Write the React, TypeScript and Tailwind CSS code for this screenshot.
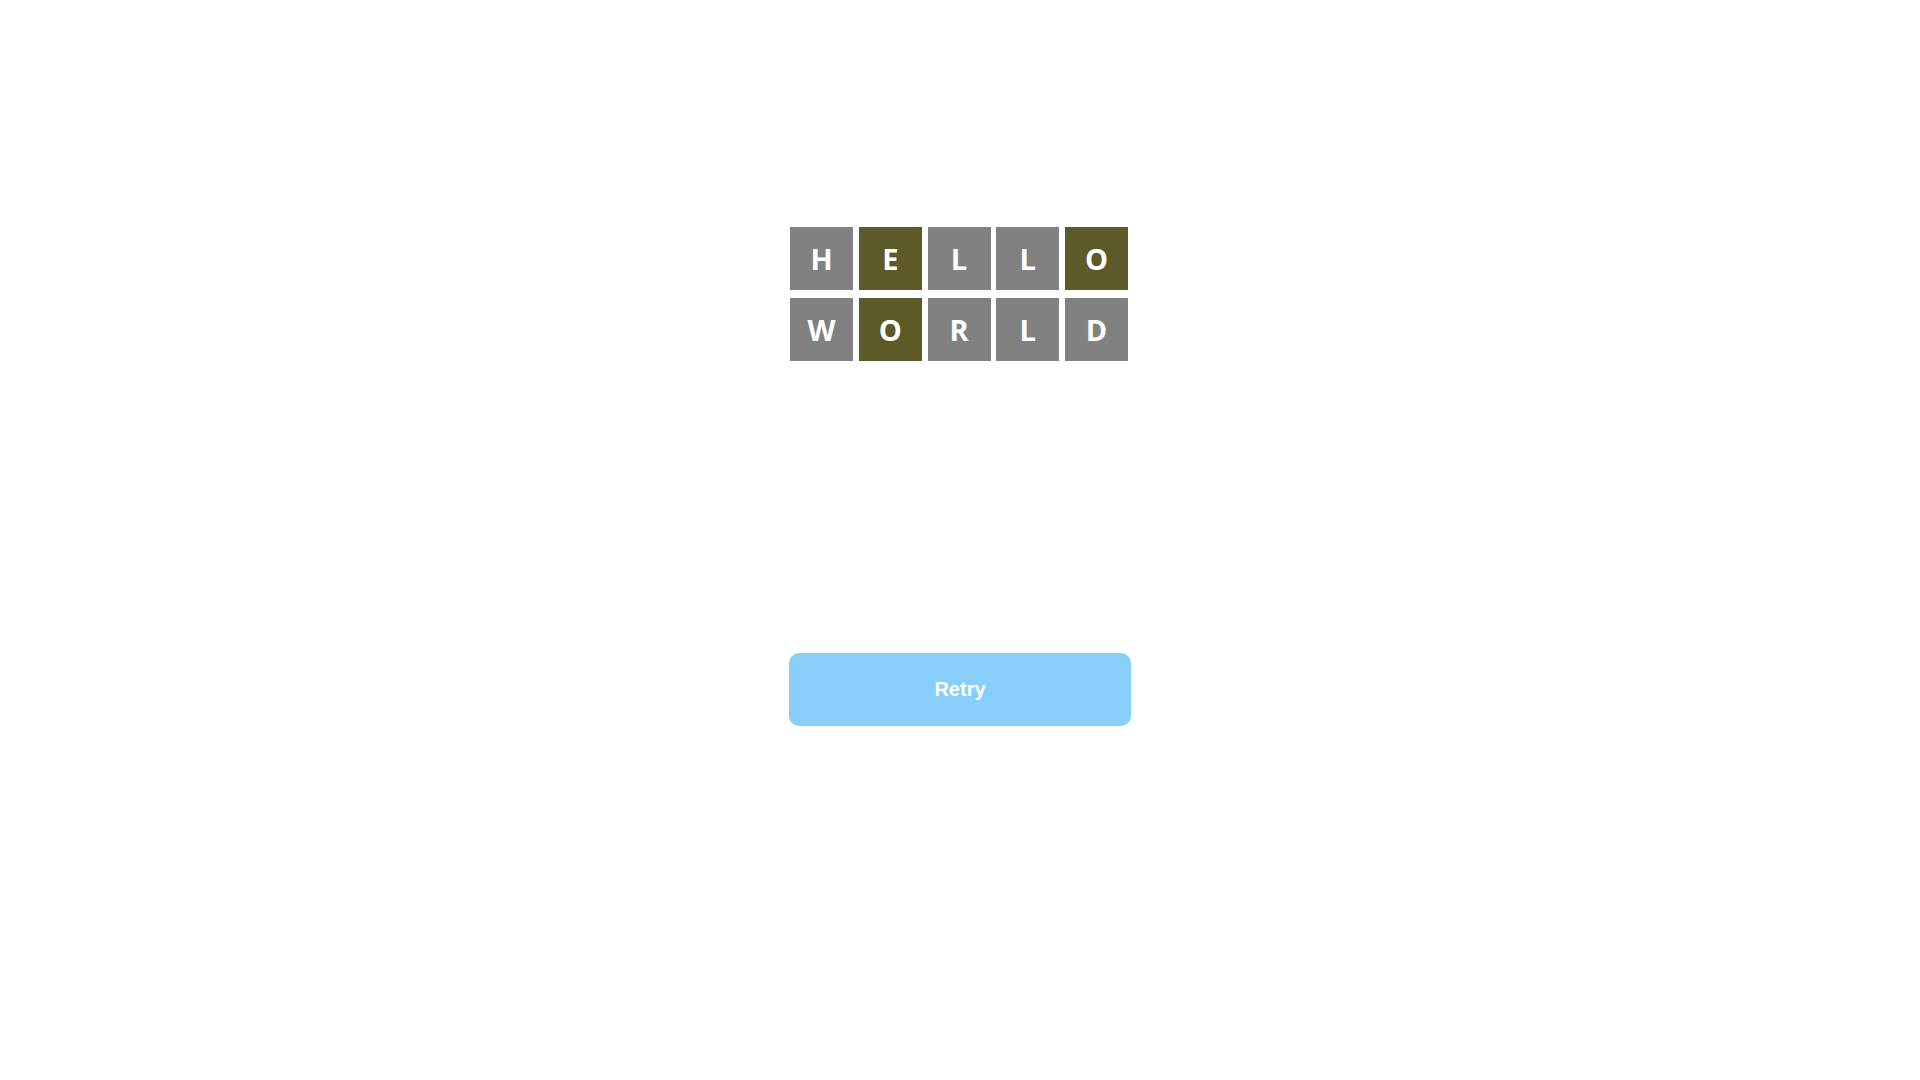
import React from 'react';

type TileState = 'absent' | 'present';

const rows: { letter: string; state: TileState }[][] = [
  [
    { letter: 'H', state: 'absent' },
    { letter: 'E', state: 'present' },
    { letter: 'L', state: 'absent' },
    { letter: 'L', state: 'absent' },
    { letter: 'O', state: 'present' },
  ],
  [
    { letter: 'W', state: 'absent' },
    { letter: 'O', state: 'present' },
    { letter: 'R', state: 'absent' },
    { letter: 'L', state: 'absent' },
    { letter: 'D', state: 'absent' },
  ],
];

const Tile = ({ letter, state }: { letter: string; state: TileState }) => (
  <div
    className={
      'w-[63px] h-[63px] flex items-center justify-center text-white font-bold text-[29px] ' +
      (state === 'present' ? 'bg-[#5c5a29]' : 'bg-[#818181]')
    }
    style={{ fontFamily: '"Open Sans", "Noto Sans", sans-serif' }}
  >
    {letter}
  </div>
);

export default function App() {
  return (
    <div className="w-full min-h-screen bg-white flex flex-col items-center pt-[227px]">
      <div className="flex flex-col gap-[8px] mr-[2px]">
        {rows.map((row, i) => (
          <div key={i} className="flex gap-[5.75px]">
            {row.map((t, j) => (
              <Tile key={j} letter={t.letter} state={t.state} />
            ))}
          </div>
        ))}
      </div>

      <button
        className="mt-[292px] w-[342px] h-[73px] pb-[2px] rounded-[10px] bg-[#87cefa] text-white font-bold text-[20px]"
        style={{ fontFamily: '"Liberation Sans", Arial, sans-serif' }}
      >
        Retry
      </button>
    </div>
  );
}
